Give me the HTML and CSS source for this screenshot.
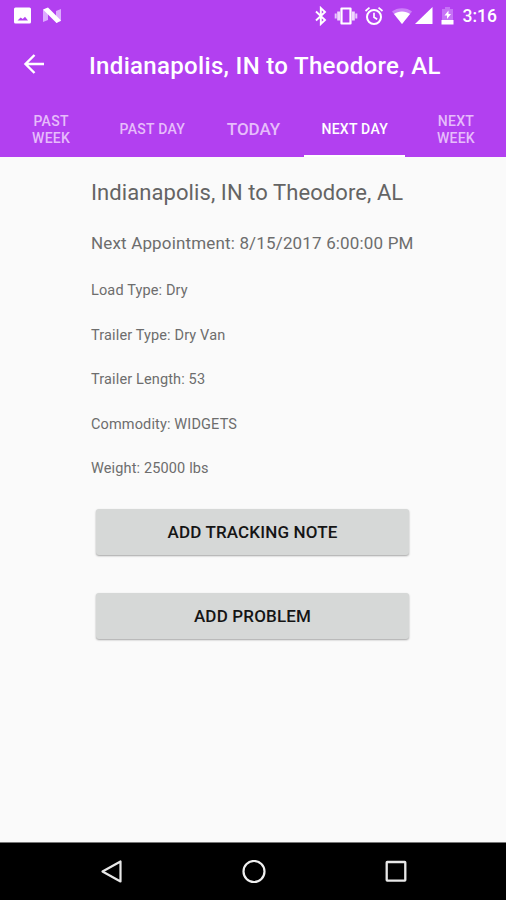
FILE: index.html
```html
<!DOCTYPE html>
<html>
<head lang="en">
    <meta charset="UTF-8">
    <title>Load Details</title>
    <link rel="stylesheet" href="styles.css">
</head>
<body>
<div class="phone">
    <div class="header">
        <div class="status">
            <svg class="icon-pic" width="18" height="18" viewBox="0 0 18 18"><path fill="#fff" fill-rule="evenodd" d="M1.500 0.500h14A1.500 1.500 0 0 1 17 2v13a1.500 1.500 0 0 1-1.500 1.500h-14A1.500 1.500 0 0 1 0 15V2A1.500 1.500 0 0 1 1.500 0.500zM3.500 13.500h10.500l-3-3.800-2.300 2.300-2-1.600z"/></svg>
            <svg class="icon-n" width="20" height="18" viewBox="0 0 20 18"><path fill="#dcaaff" d="M1 3l5-2v12l-5 2zM14 4l5-2v12l-5 2z"/><path fill="#fff" d="M1 2.500l5-2L19 13.500l-4.500 2.500z"/></svg>
            <div class="status-right">
                <svg width="14" height="20" viewBox="0 0 14 20"><path fill="none" stroke="#fff" stroke-width="1.900" d="M2 5.500l9 8.500-4.200 4V2L11 6l-9 8.500"/></svg>
                <svg class="icon-vibrate" width="24" height="20" viewBox="0 0 24 20"><path fill="none" stroke="#fff" stroke-width="2.200" stroke-linejoin="round" d="M7.500 2.500h9v15h-9z"/><path stroke="#f0d8fd" stroke-width="3" d="M4.700 5.500v9M19.300 5.500v9"/><path stroke="#e8c8fc" stroke-width="2" d="M1.700 7.500v5M22.300 7.500v5"/></svg>
                <svg class="icon-alarm" width="20" height="20" viewBox="0 0 20 20"><circle cx="10" cy="11" r="7" fill="none" stroke="#fff" stroke-width="2"/><path fill="none" stroke="#fff" stroke-width="1.700" d="M10 6.800v4.500l3.200 2M1.500 5l4-3.400M18.500 5l-4-3.400"/></svg>
                <svg class="icon-wifi" width="22" height="20" viewBox="0 0 22 20"><path fill="#cc80f8" d="M11 18L1 5.500C6 1 16 1 21 5.500z"/><path fill="#fff" d="M11 18L3 8c4-3.500 12-3.500 16 0z"/></svg>
                <svg class="icon-cell" width="18" height="20" viewBox="0 0 18 20"><path fill="#fff" d="M0 18L17.500 1v17z"/></svg>
                <svg class="icon-battery" width="13" height="20" viewBox="0 0 13 20"><path fill="#c673f6" d="M4 1h5v2h3v11H1V3h3z"/><path fill="#fff" d="M0.500 14h12v4.500h-12zM7.500 4.500L3.500 9.500h2.500V13l4-5H7.500z"/></svg>
                <span class="time">3:16</span>
            </div>
        </div>
        <div class="toolbar">
            <svg class="back" width="22" height="22" viewBox="0 0 22 22"><path fill="none" stroke="#fff" stroke-width="2.400" d="M21 11H3M11.500 2L2.500 11l9 9"/></svg>
            <h1>Indianapolis, IN to Theodore, AL</h1>
        </div>
        <ul class="tabs">
            <li>PAST<br>WEEK</li>
            <li>PAST DAY</li>
            <li class="today">TODAY</li>
            <li class="on">NEXT DAY</li>
            <li>NEXT<br>WEEK</li>
        </ul>
    </div>
    <div class="content">
        <h2>Indianapolis, IN to Theodore, AL</h2>
        <p class="appointment">Next Appointment: 8/15/2017 6:00:00 PM</p>
        <ul class="info">
            <li>Load Type: Dry</li>
            <li>Trailer Type: Dry Van</li>
            <li>Trailer Length: 53</li>
            <li>Commodity: WIDGETS</li>
            <li>Weight: 25000 lbs</li>
        </ul>
        <button class="btn">ADD TRACKING NOTE</button>
        <button class="btn">ADD PROBLEM</button>
    </div>
    <div class="navbar">
        <svg width="24" height="24" viewBox="0 0 24 24"><path fill="none" stroke="#e8e8e8" stroke-width="2.200" stroke-linejoin="round" d="M20.500 1.500v20L2.500 11.500z"/></svg>
        <svg width="24" height="24" viewBox="0 0 24 24"><circle cx="12" cy="11.500" r="10.500" fill="none" stroke="#f0f0f0" stroke-width="2.200"/></svg>
        <svg width="24" height="24" viewBox="0 0 24 24"><rect x="2.700" y="2" width="18.600" height="18.600" rx="0.500" fill="none" stroke="#e8e8e8" stroke-width="2.300"/></svg>
    </div>
</div>
</body>
</html>
```
FILE: styles.css
```css
*{
    box-sizing: border-box;
}
body{
    margin: 0;
    padding: 0;
    font-family: Roboto, "Liberation Sans", sans-serif;
}
h1,h2,p,ul{
    margin: 0;
    padding: 0;
}
ul{
    list-style-type: none;
}
.phone{
    width: 506px;
    height: 900px;
    display: flex;
    flex-direction: column;
    background-color: #fafafa;
}
.header{
    height: 157px;
    background-color: #b240f0;
    color: #fff;
}
.status{
    height: 32px;
    display: flex;
    align-items: center;
    padding: 0 9px 0 14px;
}
.icon-n{
    margin-left: 10px;
}
.status-right{
    display: flex;
    align-items: center;
    margin-left: auto;
}
.icon-vibrate{
    margin-left: 6px;
}
.icon-alarm{
    margin-left: 6px;
}
.icon-wifi{
    margin-left: 7px;
}
.icon-cell{
    margin-left: 2px;
}
.icon-battery{
    margin-left: 8px;
}
.time{
    padding-bottom: 1px;
    font-size: 17.500px;
    font-weight: 500;
    margin-left: 9px;
}
.toolbar{
    height: 68px;
    display: flex;
    align-items: center;
    padding-left: 23px;
}
.back{
    margin-bottom: 4px;
}
.toolbar h1{
    margin-left: 44px;
    font-size: 24px;
    font-weight: 500;
    line-height: 28px;
    letter-spacing: 0.320px;
}
.tabs{
    height: 57px;
    display: flex;
}
.tabs li{
    flex: 1;
    display: flex;
    align-items: center;
    justify-content: center;
    padding: 4px 0 0 1px;
    text-align: center;
    font-size: 14px;
    font-weight: 500;
    line-height: 17px;
    letter-spacing: 0.260px;
    color: #e6bcfb;
    border-bottom: 2px solid transparent;
}
.tabs .today{
    font-size: 17px;
    letter-spacing: 0;
}
.tabs .on{
    color: #fff;
    border-bottom-color: #fff;
}
.content{
    flex: 1;
    padding: 21px 92px 0 91px;
    color: #6d6d6d;
}
.content h2{
    font-size: 22px;
    font-weight: 400;
    line-height: 30px;
    letter-spacing: 0.080px;
    white-space: nowrap;
    color: #646464;
}
.appointment{
    margin-top: 23px;
    font-size: 17px;
    line-height: 24px;
    letter-spacing: 0.160px;
    white-space: nowrap;
}
.info{
    margin-top: 12px;
}
.info li{
    height: 44.600px;
    line-height: 47px;
    font-size: 14.500px;
    letter-spacing: 0.140px;
}
.btn{
    display: block;
    width: 313px;
    height: 46px;
    margin: 19px 0 38px 5px;
    padding: 0;
    border: 0;
    border-radius: 3px;
    background-color: #d6d8d7;
    box-shadow: 0 1px 2px rgba(0,0,0,0.35);
    font-family: inherit;
    font-size: 17px;
    font-weight: 500;
    letter-spacing: 0.160px;
    color: #151515;
}
.navbar{
    height: 58px;
    display: flex;
    align-items: center;
    justify-content: space-between;
    padding: 0 98px 0 100px;
    border-top: 1px solid #777;
    background-color: #000;
}
```
